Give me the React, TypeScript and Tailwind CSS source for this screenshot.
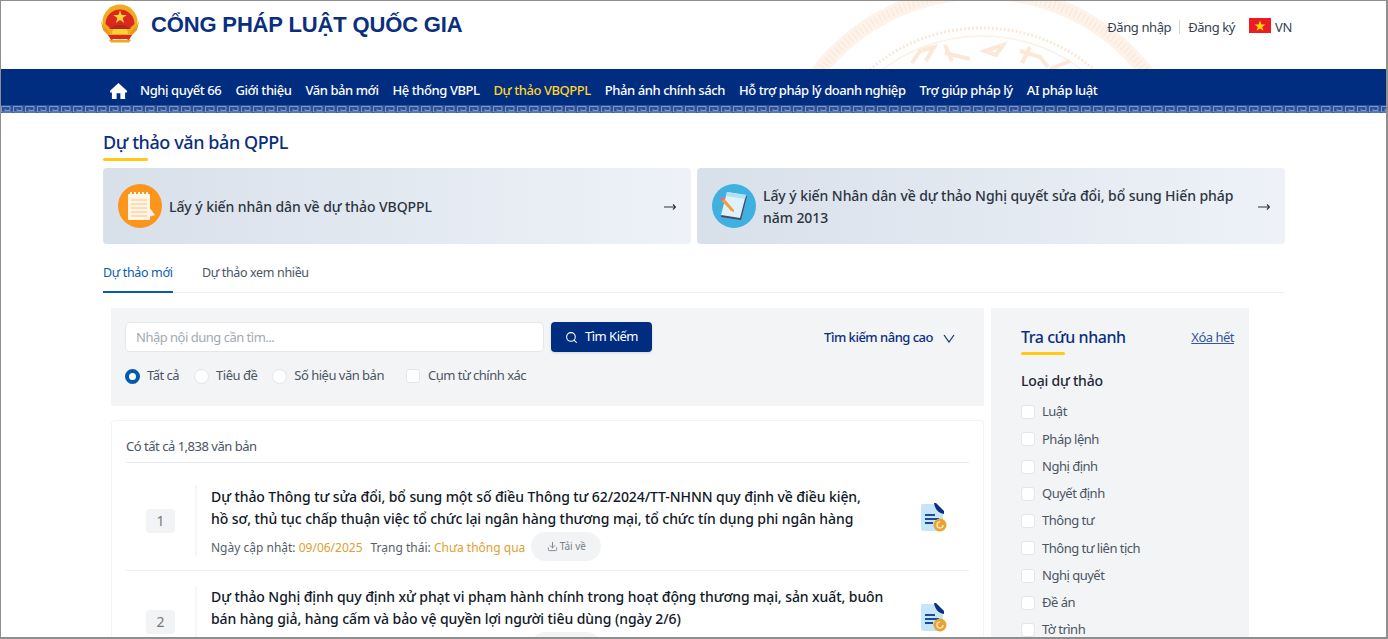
import { Download, Search } from "lucide-react";

const NAV = [
  "Nghị quyết 66",
  "Giới thiệu",
  "Văn bản mới",
  "Hệ thống VBPL",
  "Dự thảo VBQPPL",
  "Phản ánh chính sách",
  "Hỗ trợ pháp lý doanh nghiệp",
  "Trợ giúp pháp lý",
  "AI pháp luật",
];

const TYPES = [
  "Luật",
  "Pháp lệnh",
  "Nghị định",
  "Quyết định",
  "Thông tư",
  "Thông tư liên tịch",
  "Nghị quyết",
  "Đề án",
  "Tờ trình",
];

const Emblem = () => (
  <svg viewBox="0 0 40 40" className="w-10 h-10 shrink-0">
    <circle cx="20" cy="19" r="17.5" fill="#f2ab1f" />
    <path d="M0.5 17 L4 24 L10 30 L9 33 L3 27 Z M39.5 17 L36 24 L30 30 L31 33 L37 27 Z" fill="#e39a1a" />
    <path d="M5.5 21 A14.5 14.5 0 1 1 34.5 21 L29 26 H11 Z" fill="#d9281f" />
    <path d="M20 7 L21.6 12 H26.8 L22.6 15 L24.2 20 L20 17 L15.8 20 L17.4 15 L13.2 12 H18.4 Z" fill="#fcd535" />
    <path d="M12 31 A8 8 0 0 1 28 31 Z" fill="#fbd233" />
    <path d="M9 26 L16 22 H24 L31 26 Z" fill="#b5261c" />
    <path d="M8 32 H32 L29 37 L26 36 H14 L11 37 Z" fill="#d9281f" />
    <path d="M9 37 H31 L29 39.5 H11 Z" fill="#eda91e" />
  </svg>
);

const Watermark = () => (
  <svg viewBox="800 0 370 68" className="absolute left-[799px] top-0 w-[370px] h-[68px]" fill="none">
    <circle cx="982" cy="199" r="208" stroke="#fdf3ea" strokeWidth="15" />
    <circle cx="982" cy="199" r="208" stroke="#fbe9d9" strokeWidth="9" strokeDasharray="1.5 3" />
    <circle cx="982" cy="199" r="172" stroke="#fbe8d6" strokeWidth="3" strokeDasharray="2 2" />
    <circle cx="982" cy="199" r="164" stroke="#fdf0e4" strokeWidth="1.5" />
    <path
      d="M912 62 L920 50 L934 46 L926 60 M945 44 L952 60 M945 52 L970 58 M985 50 L1003 44 L996 54 Z M1020 50 L1040 56 L1048 66 M1022 62 L1030 46 M1050 68 L1070 60"
      stroke="#fbe8d6"
      strokeWidth="4"
    />
  </svg>
);

const Flag = () => (
  <svg viewBox="0 0 22 15" className="w-[22px] h-[15px] block">
    <rect width="22" height="15" fill="#ed1c24" />
    <path d="M11 2.5 L12.4 6.4 H16.4 L13.2 8.9 L14.4 12.8 L11 10.4 L7.6 12.8 L8.8 8.9 L5.6 6.4 H9.6 Z" fill="#ffde00" />
  </svg>
);

const Meander = () => (
  <svg className="w-full h-2 block" aria-hidden="true">
    <defs>
      <pattern id="meander" width="12" height="8" patternUnits="userSpaceOnUse">
        <path d="M0.5 7 V1.5 H9 V5.5 H4 V3.8 M11.5 7 H0.5" fill="none" stroke="#7f9ccf" strokeWidth="1" />
      </pattern>
    </defs>
    <rect width="100%" height="8" fill="#2c4f96" />
    <rect width="100%" height="8" fill="url(#meander)" />
  </svg>
);

const NotepadIcon = () => (
  <svg viewBox="0 0 44 44" className="w-11 h-11 shrink-0">
    <circle cx="22" cy="22" r="22" fill="#fb951c" />
    <path d="M31 23 L37 31 L31 33 Z" fill="#fff4e4" />
    <rect x="10" y="10" width="22" height="26" rx="1" fill="#fff6e8" />
    <path d="M13 16 H29 M13 20 H29 M13 24 H29 M13 28 H29 M13 32 H29" stroke="#fbc27e" strokeWidth="1" />
    <path d="M13 10 V8 M17 10 V8 M21 10 V8 M25 10 V8 M29 10 V8" stroke="#fff6e8" strokeWidth="2" />
  </svg>
);

const PencilIcon = () => (
  <svg viewBox="0 0 44 44" className="w-11 h-11 shrink-0">
    <circle cx="22" cy="22" r="22" fill="#3fb1e0" />
    <path d="M15 9 L35 12 L29 36 L9 33 Z" fill="#4a4468" />
    <path d="M15 8 L34 11 L28 34 L9 31 Z" fill="#dff2fb" />
    <path d="M15 8 L34 11 L33 15 L14 12 Z" fill="#b4e0f5" />
    <path d="M8 15 L11 13 L22 26 L22 28 L19 27 Z" fill="#f2a13a" />
    <path d="M8 15 L11 13 L12.5 15 L9.5 17 Z" fill="#e7668a" />
  </svg>
);

const DocIcon = () => (
  <svg viewBox="0 0 28 32" className="w-7 h-8">
    <path d="M3 2 H15 L24 11 V26 A3 3 0 0 1 21 29 H5 A3 3 0 0 1 2 26 V3 Z" fill="#c6e5f8" />
    <path d="M15 1 C16 7 19 11 25 12 V9 L17 1 Z" fill="#0d2f82" />
    <path d="M6 13 H16 M6 17 H20 M6 21 H14" stroke="#1d4a9c" strokeWidth="2" />
    <circle cx="21" cy="23" r="6.5" fill="#eba32f" />
    <path d="M24 23 A3 3 0 1 1 21 20" fill="none" stroke="#fbe3b5" strokeWidth="1.5" />
  </svg>
);

const Box = () => (
  <span className="block w-[14px] h-[14px] rounded-[3px] bg-white border border-[#e2e5ea] shrink-0" />
);

const Radio = ({ on }: { on?: boolean }) => (
  <span
    className={
      on
        ? "block w-[15px] h-[15px] rounded-full bg-white border-[4px] border-[#005bac] shrink-0"
        : "block w-[15px] h-[15px] rounded-full bg-white border border-[#e2e5ea] shrink-0"
    }
  />
);

const Banner = ({ icon, text }: { icon: React.ReactNode; text: React.ReactNode }) => (
  <div className="w-[588px] h-[76px] rounded bg-gradient-to-r from-[#d8e0ea] to-[#eef2f8] flex items-center pl-[15px] pr-[15px]">
    {icon}
    <p className="flex-1 mt-[2px] ml-[7px] text-sm font-medium leading-[22px] tracking-[-0.07px] text-[#2b3440]">{text}</p>
    <svg viewBox="0 0 12 8" className="w-3 h-2 mt-[2px] shrink-0" fill="none" stroke="#333" strokeWidth="1.2">
      <path d="M0 4 H11.5 M9 1.5 L11.5 4 L9 6.5" />
    </svg>
  </div>
);

const Item = ({ n, title, last }: { n: number; title: React.ReactNode; last?: boolean }) => (
  <div className={last ? "flex pt-[15px] mx-[14px]" : "flex pt-[23px] pb-[9px] mx-[14px] border-b border-[#eeeff2]"}>
    <div
      className={
        last
          ? "w-[71px] shrink-0 flex items-center border-r-2 border-[#f5f6f8] h-[71px] pr-[20px] justify-end"
          : "w-[71px] -mt-px shrink-0 flex items-center border-r-2 border-[#f5f6f8] h-[71px] pr-[20px] justify-end"
      }
    >
      <span className="w-[29px] h-6 rounded bg-[#f2f3f5] text-[#777] text-sm flex items-center justify-center">{n}</span>
    </div>
    <div className="ml-[14px] w-[690px] shrink-0">
      <p className="w-[675px] text-[14px] font-medium leading-[22px] tracking-[-0.08px] text-[#111827]">{title}</p>
      <div className="flex items-center h-[29px] text-xs leading-[31px] text-[#555e68] mt-[2px] whitespace-nowrap">
        <span className="mt-[2px]">Ngày cập nhật:&nbsp;</span>
        <span className="mt-[2px] text-[#e0a030]">09/06/2025</span>
        <span className="mt-[2px] ml-2">Trạng thái:&nbsp;</span>
        <span className="mt-[2px] text-[#e0a030]">Chưa thông qua</span>
        <span className="ml-[6px] w-[70px] h-[29px] rounded-full bg-[#f2f3f5] flex items-center justify-center gap-[2px] text-[10px] text-[#7a818a]">
          <Download className="w-[11px] h-[11px]" /> Tải về
        </span>
      </div>
    </div>
    <div className="ml-[18px] mt-[16px]">
      <DocIcon />
    </div>
  </div>
);

export default function App() {
  return (
    <div
      className="relative w-[1388px] h-[639px] overflow-hidden bg-white box-border border-t border-l border-r-2 border-b-2 border-[#8f8f8f]"
      style={{ fontFamily: '"Noto Sans", sans-serif' }}
    >
      <Watermark />
      <header className="relative h-[68px] pl-[99px] pr-[94px] flex items-start">
        <div className="mt-[2px]">
          <Emblem />
        </div>
        <h1
          className="ml-[11px] mt-[9px] text-[22px] leading-[30px] font-bold tracking-[-0.15px] text-[#0b2f7f]"
          style={{ fontFamily: '"Liberation Sans", sans-serif' }}
        >
          CỔNG PHÁP LUẬT QUỐC GIA
        </h1>
        <div className="ml-auto mt-[16px] flex items-center text-[13px] leading-5 tracking-[-0.4px] text-[#374151]">
          Đăng nhập
          <span className="mx-2 w-px h-[14px] bg-[#d1d5db]" />
          Đăng ký
          <span className="ml-[14px] mr-[4px] mb-[3px]">
            <Flag />
          </span>
          VN
        </div>
      </header>

      <nav className="relative h-[44px] bg-[#002d80]">
        <div className="h-9 pl-[109px] flex items-center gap-[14px] pt-[8px] whitespace-nowrap text-[13px] font-medium tracking-[-0.43px] text-white">
          <svg viewBox="0 0 18 17" className="w-[17px] h-4 mr-[-1px]" fill="currentColor">
            <path d="M9 0 L18 8.2 V10 H16 V17 H11 V11 H7 V17 H2 V10 H0 V8.2 Z" />
          </svg>
          {NAV.map((item) => (
            <span key={item} className={item === "Dự thảo VBQPPL" ? "text-[#ffd42a]" : ""}>
              {item}
            </span>
          ))}
        </div>
        <Meander />
      </nav>

      <main className="pl-[102px] w-[1284px]">
        <h2 className="mt-[15px] text-lg leading-7 font-medium tracking-[-0.42px] text-[#0b2f7f]">Dự thảo văn bản QPPL</h2>
        <div className="w-[45px] h-[3px] mt-[2px] rounded-full bg-[#ffc914]" />

        <div className="mt-[7px] flex gap-[6px]">
          <Banner icon={<NotepadIcon />} text="Lấy ý kiến nhân dân về dự thảo VBQPPL" />
          <Banner
            icon={<PencilIcon />}
            text={
              <>
                Lấy ý kiến Nhân dân về dự thảo Nghị quyết sửa đổi, bổ sung Hiến pháp
                <br />
                năm 2013
              </>
            }
          />
        </div>

        <div className="mt-[15px] h-[34px] w-[1182px] flex gap-[29px] border-b border-[#eeeff2] text-[12.5px] leading-[28px] tracking-[-0.35px]">
          <span className="w-[70px] h-[34px] text-[#0b5cad] border-b-2 border-[#0b5cad] whitespace-nowrap">Dự thảo mới</span>
          <span className="text-[#4b5563]">Dự thảo xem nhiều</span>
        </div>

        <div className="mt-[15px] ml-[8px] flex gap-[7px] items-start">
          <div className="w-[873px] shrink-0">
            <section className="h-[98px] bg-[#f3f4f6] pt-[14px] px-[14px] text-[13px] tracking-[-0.5px]">
              <div className="flex items-center">
                <div className="w-[419px] h-[30px] bg-white border border-[#e5e7eb] rounded-[5px] px-[10px] leading-[28px] text-[#a3a9b2]">
                  Nhập nội dung cần tìm...
                </div>
                <button className="ml-[7px] w-[101px] h-[30px] rounded bg-[#002d80] text-white flex items-center justify-center gap-[7px] shadow-sm">
                  <Search className="w-[13px] h-[13px]" /> Tìm Kiếm
                </button>
                <span className="ml-auto mr-[15px] mt-[2px] font-medium text-[#0b2f7f] flex items-center gap-[10px]">
                  Tìm kiếm nâng cao
                  <svg viewBox="0 0 12 9" className="w-3 h-[9px]" fill="none" stroke="currentColor" strokeWidth="1.2">
                    <path d="M1 1 L6 8 L11 1" />
                  </svg>
                </span>
              </div>
              <div className="mt-[14px] h-5 flex items-center text-[#4b5563] whitespace-nowrap">
                <Radio on />
                <span className="ml-[7px]">Tất cả</span>
                <span className="ml-[15px]"><Radio /></span>
                <span className="ml-[7px]">Tiêu đề</span>
                <span className="ml-[15px]"><Radio /></span>
                <span className="ml-[7px]">Số hiệu văn bản</span>
                <span className="ml-[22px]"><Box /></span>
                <span className="ml-[8px]">Cụm từ chính xác</span>
              </div>
            </section>

            <section className="mt-[14px] h-[300px] rounded-t border border-b-0 border-[#f3f4f6]">
              <div className="mx-[14px] h-[42px] pt-[15px] text-[13px] leading-5 tracking-[-0.48px] text-[#4b5563] border-b border-[#e8eaed]">
                Có tất cả 1,838 văn bản
              </div>
              <Item
                n={1}
                title={
                  <>
                    Dự thảo Thông tư sửa đổi, bổ sung một số điều Thông tư 62/2024/TT-NHNN quy định về điều kiện,
                    <br />
                    hồ sơ, thủ tục chấp thuận việc tổ chức lại ngân hàng thương mại, tổ chức tín dụng phi ngân hàng
                  </>
                }
              />
              <Item
                n={2}
                last
                title="Dự thảo Nghị định quy định xử phạt vi phạm hành chính trong hoạt động thương mại, sản xuất, buôn bán hàng giả, hàng cấm và bảo vệ quyền lợi người tiêu dùng (ngày 2/6)"
              />
            </section>
          </div>

          <aside className="w-[258px] h-[340px] shrink-0 bg-[#f3f4f6] pt-[16px] pl-[30px] pr-[15px]">
            <div className="flex items-center justify-between h-[26px]">
              <span className="text-base font-medium tracking-[-0.45px] text-[#0b2f7f]">Tra cứu nhanh</span>
              <span className="mt-[2px] text-[13px] tracking-[-0.5px] text-[#34569c] underline">Xóa hết</span>
            </div>
            <div className="w-[44px] h-[3px] mt-[2px] rounded-full bg-[#ffc914]" />
            <h3 className="mt-[16px] text-sm leading-5 font-medium tracking-[-0.2px] text-[#1f2937]">Loại dự thảo</h3>
            <ul className="mt-[11px] flex flex-col gap-[7.25px]">
              {TYPES.map((t) => (
                <li key={t} className="h-5 flex items-center gap-[7px] text-[13px] tracking-[-0.5px] text-[#4b5563]">
                  <Box />
                  {t}
                </li>
              ))}
            </ul>
          </aside>
        </div>
      </main>
    </div>
  );
}
